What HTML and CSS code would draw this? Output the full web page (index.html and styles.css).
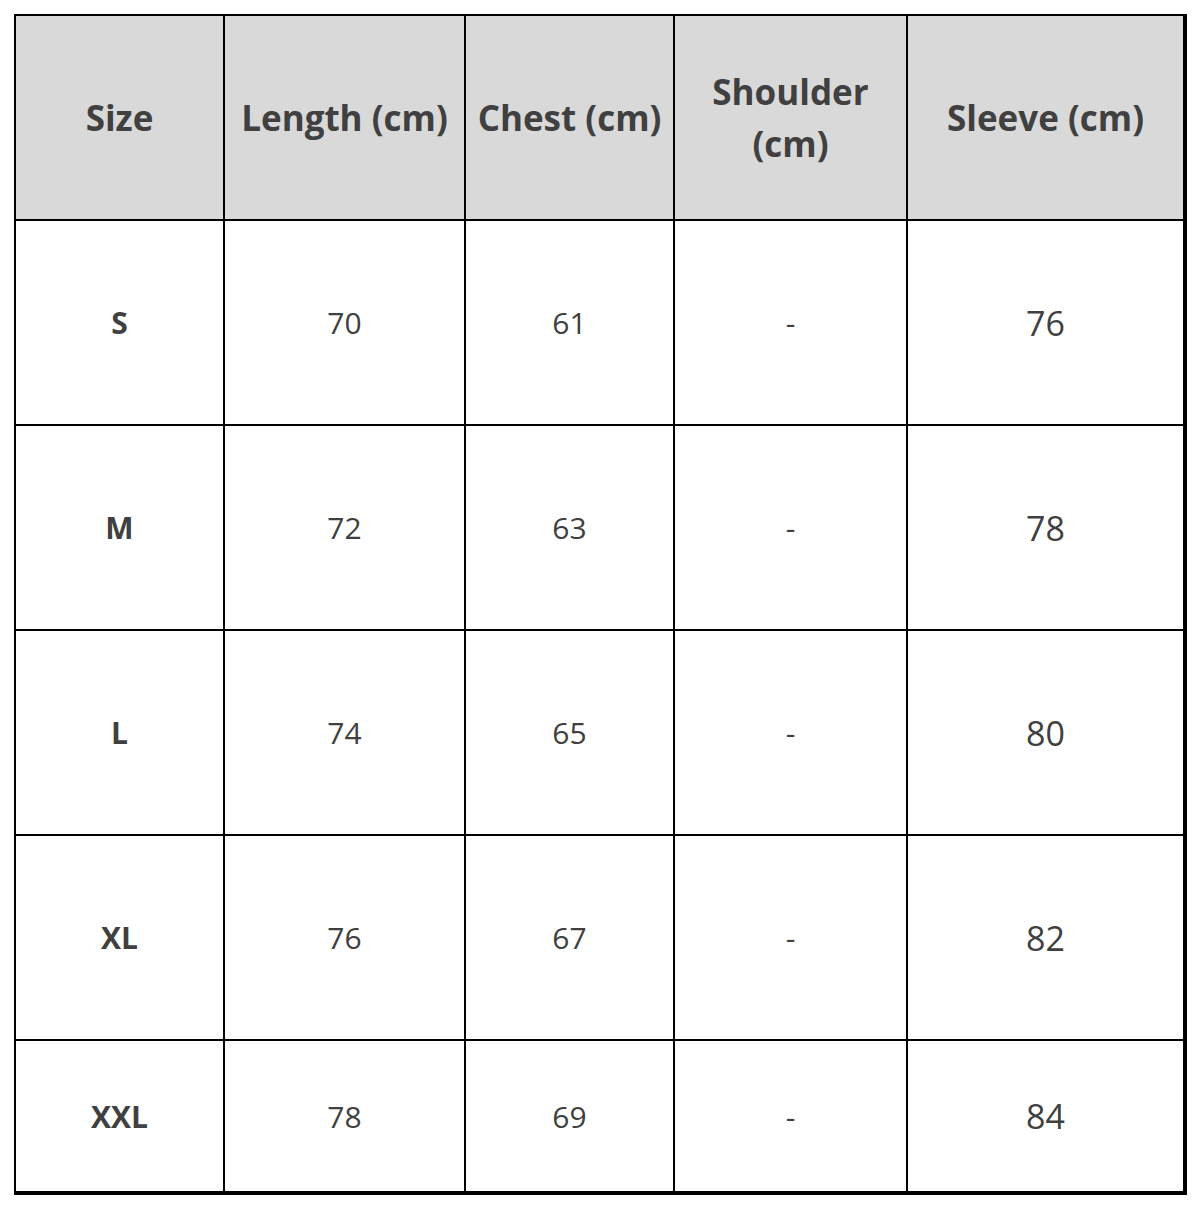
FILE: index.html
```html
<!DOCTYPE html>
<html lang="en">
<head>
<meta charset="utf-8">
<title>Size chart</title>
<link rel="stylesheet" href="styles.css">
</head>
<body>
<div class="page">
  <table class="size-table">
    <colgroup>
      <col class="c1"><col class="c2"><col class="c3"><col class="c4"><col class="c5">
    </colgroup>
    <thead>
      <tr>
        <th>Size</th>
        <th>Length (cm)</th>
        <th>Chest (cm)</th>
        <th>Shoulder<br>(cm)</th>
        <th>Sleeve (cm)</th>
      </tr>
    </thead>
    <tbody>
      <tr><td class="sz">S</td><td>70</td><td>61</td><td>-</td><td class="big">76</td></tr>
      <tr><td class="sz">M</td><td>72</td><td>63</td><td>-</td><td class="big">78</td></tr>
      <tr><td class="sz">L</td><td>74</td><td>65</td><td>-</td><td class="big">80</td></tr>
      <tr><td class="sz">XL</td><td>76</td><td>67</td><td>-</td><td class="big">82</td></tr>
      <tr class="last"><td class="sz">XXL</td><td>78</td><td>69</td><td>-</td><td class="big">84</td></tr>
    </tbody>
  </table>
</div>
</body>
</html>
```

FILE: styles.css
```css
html, body {
  margin: 0;
  padding: 0;
  background: #ffffff;
}

.page {
  padding: 14px 0 0 14px;
}

.size-table {
  border-collapse: collapse;
  table-layout: fixed;
  width: 1170px;
  font-family: "Open Sans", "Noto Sans", sans-serif;
  color: #404040;
}

.c1 { width: 209px; }
.c2 { width: 241px; }
.c3 { width: 209px; }
.c4 { width: 233px; }
.c5 { width: 278px; }

.size-table th,
.size-table td {
  border: 2px solid #000;
  text-align: center;
  vertical-align: middle;
  padding: 0;
}

.size-table th {
  background: #d9d9d9;
  font-weight: 700;
  font-size: 35px;
  line-height: 52px;
  height: 203px;
}

.size-table td {
  font-size: 30px;
  font-weight: 400;
  height: 203px;
}

.size-table td.sz {
  font-weight: 700;
}

.size-table td.big {
  font-size: 34px;
}

.size-table tr.last td {
  height: 150px;
  border-bottom-width: 4px;
}

.size-table th:last-child,
.size-table td:last-child {
  border-right-width: 4px;
}
```
